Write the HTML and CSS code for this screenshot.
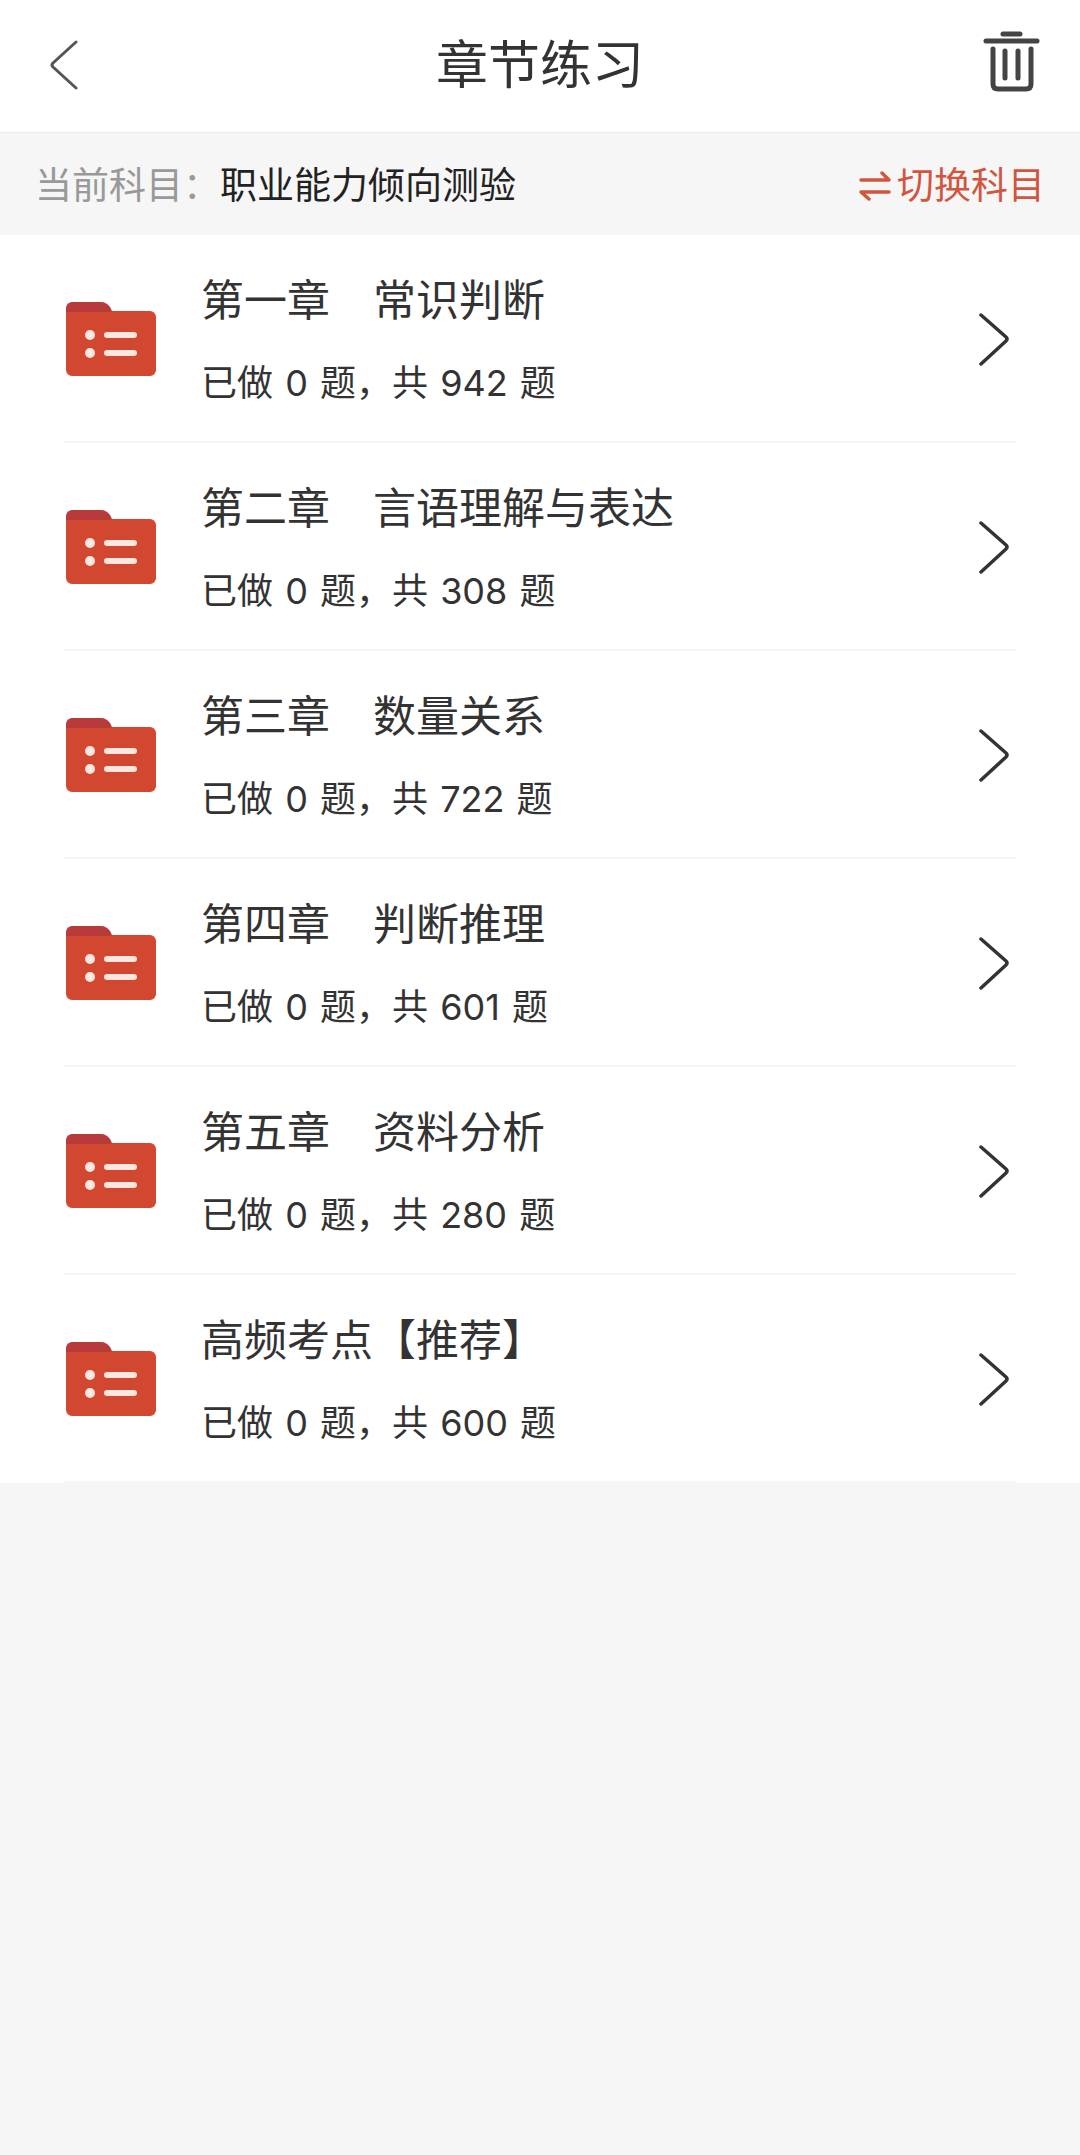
FILE: index.html
```html
<!DOCTYPE html>
<html lang="zh-CN">
<head>
<meta charset="utf-8">
<meta name="viewport" content="width=device-width, initial-scale=1">
<title>章节练习</title>
<link rel="stylesheet" href="styles.css">
</head>
<body>
<svg class="sprite" aria-hidden="true">
  <symbol id="folder" viewBox="0 0 92 76">
    <path d="M1 20V7a6 6 0 0 1 6-6h29c4 0 7 2 9 5l4 8v8z" fill="#b83a3b"/>
    <path d="M1 11h44c1 0 1-1 3-1h37a6 6 0 0 1 6 6v53a6 6 0 0 1-6 6H7a6 6 0 0 1-6-6z" fill="#d14730"/>
    <g fill="#ffe6e0">
      <circle cx="25" cy="34" r="5"/>
      <circle cx="25" cy="52" r="5"/>
      <rect x="39" y="31" width="33" height="6" rx="3"/>
      <rect x="39" y="49" width="33" height="6" rx="3"/>
    </g>
  </symbol>
  <symbol id="chevron" viewBox="0 0 32 56">
    <path d="M3 4 28 26q2 2 0 4L3 53" fill="none" stroke="currentColor" stroke-width="3.5" stroke-linecap="round" stroke-linejoin="round"/>
  </symbol>
</svg>

<header class="topbar">
  <button class="icon-button icon-button-start" type="button" aria-label="返回">
    <svg class="back-icon" viewBox="0 0 28 50" aria-hidden="true"><path d="M26 2 3 23q-2 2 0 4L26 48" fill="none" stroke="currentColor" stroke-width="3" stroke-linecap="round" stroke-linejoin="round"/></svg>
  </button>
  <h1 class="title">章节练习</h1>
  <button class="icon-button icon-button-end" type="button" aria-label="清空">
    <svg class="trash-icon" viewBox="0 0 58 62" aria-hidden="true">
      <g fill="none" stroke="currentColor" stroke-width="5" stroke-linecap="round" stroke-linejoin="round">
        <path d="M21 4h17M4 11h51M11 19v35q0 5 5 5h28q5 0 5-5V19M23 21v27M36 21v27"/>
      </g>
    </svg>
  </button>
</header>

<section class="subject">
  <p class="subject-text"><span class="subject-label">当前科目：</span>职业能力倾向测验</p>
  <button class="switch" type="button">
    <svg class="switch-icon" viewBox="0 0 32 30" aria-hidden="true"><path d="M2 9h28L23 2M30 21H2l8 7" fill="none" stroke="currentColor" stroke-width="3.5" stroke-linecap="round" stroke-linejoin="round"/></svg>
    切换科目
  </button>
</section>

<main>
  <ul class="chapters">
    <li><a class="chapter" href="#c1">
      <svg class="folder"><use href="#folder"/></svg>
      <div class="chapter-text"><h2 class="chapter-name">第一章　常识判断</h2><p class="progress">已做 <span class="count">0</span> 题，共 <span class="count">942</span> 题</p></div>
      <svg class="chevron"><use href="#chevron"/></svg>
    </a></li>
    <li><a class="chapter" href="#c2">
      <svg class="folder"><use href="#folder"/></svg>
      <div class="chapter-text"><h2 class="chapter-name">第二章　言语理解与表达</h2><p class="progress">已做 <span class="count">0</span> 题，共 <span class="count">308</span> 题</p></div>
      <svg class="chevron"><use href="#chevron"/></svg>
    </a></li>
    <li><a class="chapter" href="#c3">
      <svg class="folder"><use href="#folder"/></svg>
      <div class="chapter-text"><h2 class="chapter-name">第三章　数量关系</h2><p class="progress">已做 <span class="count">0</span> 题，共 <span class="count">722</span> 题</p></div>
      <svg class="chevron"><use href="#chevron"/></svg>
    </a></li>
    <li><a class="chapter" href="#c4">
      <svg class="folder"><use href="#folder"/></svg>
      <div class="chapter-text"><h2 class="chapter-name">第四章　判断推理</h2><p class="progress">已做 <span class="count">0</span> 题，共 <span class="count">601</span> 题</p></div>
      <svg class="chevron"><use href="#chevron"/></svg>
    </a></li>
    <li><a class="chapter" href="#c5">
      <svg class="folder"><use href="#folder"/></svg>
      <div class="chapter-text"><h2 class="chapter-name">第五章　资料分析</h2><p class="progress">已做 <span class="count">0</span> 题，共 <span class="count">280</span> 题</p></div>
      <svg class="chevron"><use href="#chevron"/></svg>
    </a></li>
    <li><a class="chapter" href="#c6">
      <svg class="folder"><use href="#folder"/></svg>
      <div class="chapter-text"><h2 class="chapter-name">高频考点【推荐】</h2><p class="progress">已做 <span class="count">0</span> 题，共 <span class="count">600</span> 题</p></div>
      <svg class="chevron"><use href="#chevron"/></svg>
    </a></li>
  </ul>
</main>
</body>
</html>
```
FILE: styles.css
```css
* {
  box-sizing: border-box;
}

body {
  margin: 0;
  background: #f6f6f6;
  color: #333;
  font-family: Inter, "Noto Sans CJK SC", sans-serif;
}

h1, h2, p, ul {
  margin: 0;
  padding: 0;
  font-weight: 400;
}

button {
  padding: 0;
  border: 0;
  background: none;
  color: inherit;
  font: inherit;
}

svg {
  display: block;
  flex: none;
}

.sprite {
  display: none;
}

.topbar {
  display: grid;
  grid-template-columns: 1fr auto 1fr;
  align-items: center;
  height: 133px;
  padding: 0 40px;
  border-bottom: 1px solid #ebebeb;
  background: #fff;
}

.title {
  font-size: 52px;
  line-height: 72px;
}

.icon-button-start {
  justify-self: start;
  padding: 0 0 2px 10px;
}

.icon-button-end {
  justify-self: end;
  padding-bottom: 10px;
}

.back-icon {
  width: 28px;
  height: 50px;
  color: #555;
}

.trash-icon {
  width: 58px;
  height: 62px;
  color: #444;
}

.subject {
  display: flex;
  align-items: center;
  justify-content: space-between;
  height: 102px;
  padding: 4px 35px 0;
  font-size: 37px;
  line-height: 52px;
}

.subject-text {
  color: #222;
}

.subject-label {
  color: #999;
}

.switch {
  display: flex;
  align-items: center;
  gap: 6px;
  color: #d2563f;
}

.switch-icon {
  width: 32px;
  height: 30px;
}

.chapters {
  padding: 0 64px;
  background: #fff;
  list-style: none;
}

.chapter {
  display: flex;
  align-items: center;
  height: 208px;
  padding-top: 2px;
  border-bottom: 2px solid #f6f6f6;
  color: inherit;
  text-decoration: none;
}

.folder {
  width: 92px;
  height: 76px;
  margin: 0 44px 0 1px;
}

.chapter-text {
  flex: 1;
}

.chapter-name {
  margin-bottom: 28px;
  font-size: 43px;
  line-height: 60px;
}

.progress {
  font-size: 36px;
  line-height: 50px;
}

.count {
  margin: 0 2px;
}

.chevron {
  width: 32px;
  height: 56px;
  margin-right: 6px;
}
```
